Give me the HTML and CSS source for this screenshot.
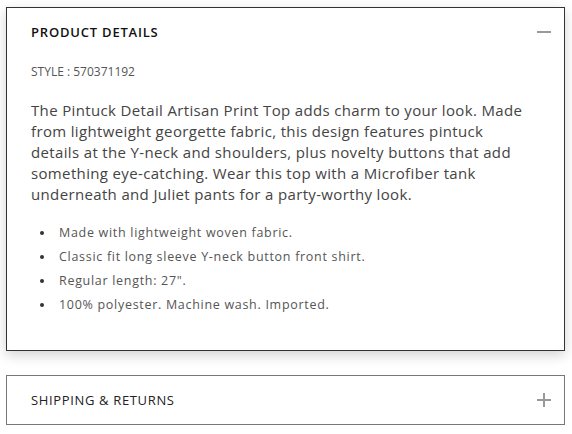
FILE: index.html
```html
<!DOCTYPE html>
<html>
<head>
<meta charset="utf-8">
<link rel="stylesheet" href="styles.css">
</head>
<body>
<div class="accordion">
  <section class="panel panel-open">
    <div class="panel-head">
      <h2 class="panel-title">PRODUCT DETAILS</h2>
      <span class="icon icon-minus"></span>
    </div>
    <div class="panel-body">
      <p class="style-no">STYLE : 570371192</p>
      <p class="desc">The Pintuck Detail Artisan Print Top adds charm to your look. Made from lightweight georgette fabric, this design features pintuck details at the Y-neck and shoulders, plus novelty buttons that add something eye-catching. Wear this top with a Microfiber tank underneath and Juliet pants for a party-worthy look.</p>
      <ul class="features">
        <li>Made with lightweight woven fabric.</li>
        <li>Classic fit long sleeve Y-neck button front shirt.</li>
        <li>Regular length: 27".</li>
        <li>100% polyester. Machine wash. Imported.</li>
      </ul>
    </div>
  </section>
  <section class="panel panel-closed">
    <div class="panel-head">
      <h2 class="panel-title light">SHIPPING &amp; RETURNS</h2>
      <span class="icon icon-plus"></span>
    </div>
  </section>
</div>
</body>
</html>
```
FILE: styles.css
```css
* { box-sizing: border-box; }
html, body { margin: 0; padding: 0; background: #fff; }
body {
  font-family: "Open Sans", "Liberation Sans", sans-serif;
  padding: 7px 7px 0 6px;
}
.accordion {
  display: flex;
  flex-direction: column;
  gap: 24px;
  width: 559px;
}
.panel {
  background: #fff;
}
.panel-open {
  border: 1px solid #333;
  box-shadow: 0 4px 12px rgba(0,0,0,0.18);
}
.panel-closed {
  border: 1px solid #777;
}
.panel-head {
  display: flex;
  align-items: center;
  justify-content: space-between;
  padding: 16px 13px 16px 24px;
}
.panel-title {
  margin: 0;
  font-size: 13px;
  line-height: 16px;
  font-weight: 600;
  color: #111;
  letter-spacing: 0.8px;
}
.panel-title.light { font-weight: 400; color: #222; letter-spacing: 0.65px; }
.icon {
  width: 14px;
  height: 14px;
  position: relative;
  display: block;
}
.icon::before, .icon::after {
  content: "";
  position: absolute;
  background: #999;
}
.icon::before { left: 0; right: 0; top: 6px; height: 1.5px; }
.icon-minus::after { display: none; }
.icon-plus::after { top: 0; bottom: 0; left: 6.25px; width: 1.5px; }
.panel-body {
  padding: 8px 40px 33px 24px;
}
.style-no {
  margin: 0;
  font-size: 12px;
  line-height: 16px;
  color: #555;
}
.desc {
  margin: 20px 0 0 0;
  font-size: 15px;
  line-height: 21px;
  letter-spacing: 0.35px;
  color: #444;
}
.features {
  list-style: none;
  margin: 16px 0 0 0;
  padding: 0 0 0 9px;
}
.features li {
  display: flex;
  align-items: center;
  font-size: 12.5px;
  line-height: 24px;
  color: #555;
  letter-spacing: 0.7px;
}
.features li::before {
  content: "";
  width: 4px;
  height: 4px;
  border-radius: 50%;
  background: #333;
  margin-right: 15px;
  flex: none;
}
```
